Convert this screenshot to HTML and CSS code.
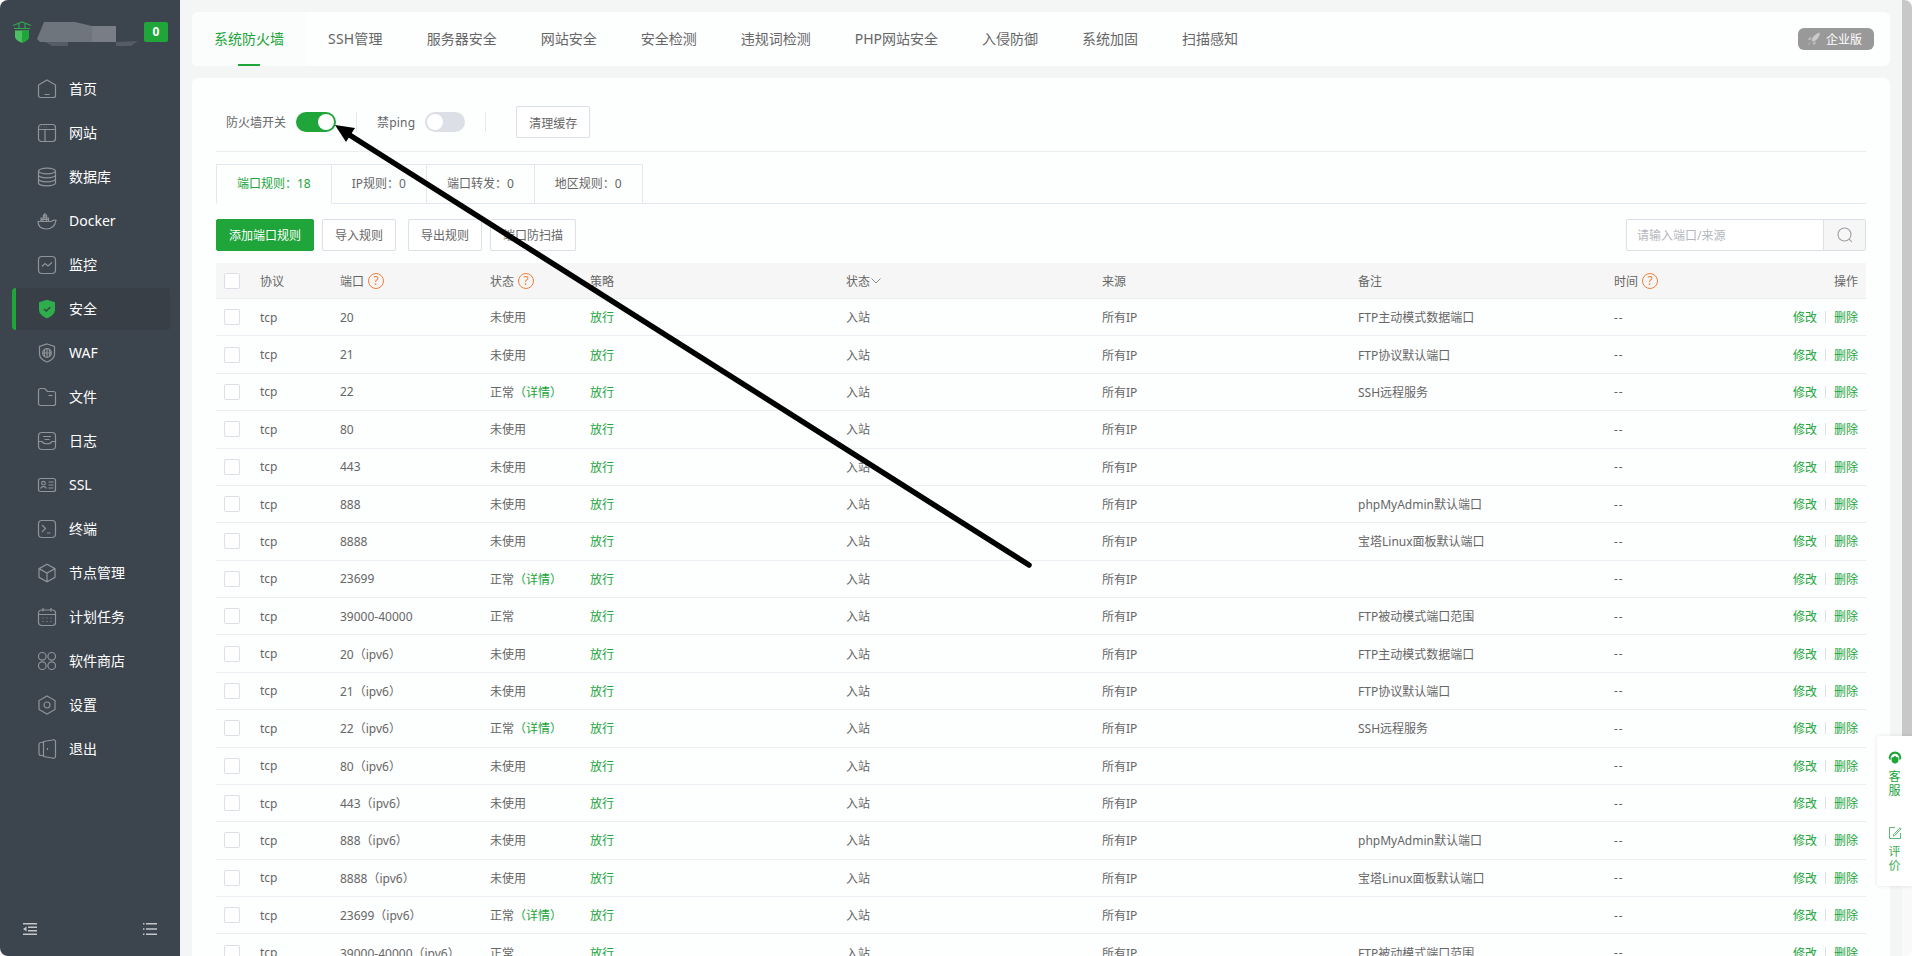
FILE: index.html
```html
<!DOCTYPE html>
<html lang="zh-CN">
<head>
    <meta charset="UTF-8">
    <title>系统防火墙</title>
    <link rel="stylesheet" href="styles.css">
</head>
<body>
<div class="app">
    <aside class="side">
        <div class="side-top">
            <svg class="logo" viewBox="0 0 20 22" width="20" height="22">
                <path d="M1 4.500 10 1l9 3.500" fill="none" stroke="#2fa84f" stroke-width="1.200"/>
                <path d="M2 7.500h16M7 3v5M13 3v5" fill="none" stroke="#2fa84f" stroke-width="1.200"/>
                <path d="M3 9.500h14v6c0 3-3.500 5-7 6.200-3.500-1.200-7-3.200-7-6.200z" fill="#4cc063"/>
                <path d="M10 9.500h7v6c0 3-3.500 5-7 6.200z" fill="#20a53a"/>
            </svg>
            <svg class="redacted" viewBox="0 0 101 26" width="101" height="26">
                <polygon points="0,18 7,1 38,1 55,5 55,21 7,21 3,21" fill="#6f757c"/>
                <rect x="55" y="5" width="24" height="16" fill="#797e86"/>
                <polygon points="7,21 31,21 31,25 15,25 10,22" fill="#555c65"/>
                <polygon points="79,21 101,20 94,25 79,25" fill="#555c65"/>
            </svg>
            <span class="msg-badge">0</span>
        </div>
        <nav class="nav">
            <a class="nav-item">
                <svg viewBox="0 0 20 20"><path d="M10 1 18.500 6v10.500a2 2 0 0 1-2 2h-13a2 2 0 0 1-2-2V6z"/><path d="M7.500 15.500h5"/></svg>
                首页
            </a>
            <a class="nav-item">
                <svg viewBox="0 0 20 20"><rect x="1.500" y="1.500" width="17" height="17" rx="3"/><path d="M1.500 6.500h17M8 6.500v12M4.500 4h.5M7 4h.5M9.500 4h.5"/></svg>
                网站
            </a>
            <a class="nav-item">
                <svg viewBox="0 0 20 20"><ellipse cx="10" cy="4" rx="8.500" ry="2.800"/><path d="M1.500 4v12c0 1.500 3.800 2.800 8.500 2.800s8.500-1.300 8.500-2.800V4M1.500 8c0 1.500 3.800 2.800 8.500 2.800s8.500-1.300 8.500-2.800M1.500 12c0 1.500 3.800 2.800 8.500 2.800s8.500-1.300 8.500-2.800"/></svg>
                数据库
            </a>
            <a class="nav-item">
                <svg viewBox="0 0 20 20"><path d="M1 10.500h13.500c.5-1.200 2-1.800 4.500-1.200-.8 4.700-4 8.700-10 8.700-5 0-8-2.800-8-7.500z"/><path d="M4 10V7h7.500v3M6.500 7V4h3v3M4 8.500h7.500M7.800 4V7M6 7v3M9.500 7v3M7.800 2v2"/></svg>
                Docker
            </a>
            <a class="nav-item">
                <svg viewBox="0 0 20 20"><rect x="1.500" y="1.500" width="17" height="17" rx="3.500"/><path d="M5 11.500 8 8.500l3 2.500 4-3.500"/></svg>
                监控
            </a>
            <a class="nav-item active">
                <svg viewBox="0 0 20 20" class="solid"><path d="M10 .8 18 3.200v7.300c0 4.200-3.600 7.200-8 8.800-4.400-1.600-8-4.600-8-8.800V3.200z" fill="#2fac4b"/><path d="M7 10l2.200 2 4-3.800" fill="none" stroke="#2b4a38" stroke-width="1.500"/></svg>
                安全
            </a>
            <a class="nav-item">
                <svg viewBox="0 0 20 20"><path d="M10 1 17.500 3.500v7.500c0 3.700-3.300 6.400-7.500 8-4.200-1.600-7.500-4.300-7.500-8V3.500z"/><circle cx="10" cy="10" r="4.300"/><path d="M5.700 10h8.600M10 5.700v8.600M7.800 6.500c-1 2.300-1 4.700 0 7M12.200 6.500c1 2.300 1 4.700 0 7"/></svg>
                WAF
            </a>
            <a class="nav-item">
                <svg viewBox="0 0 20 20"><path d="M1.500 3.500a2 2 0 0 1 2-2h4.300l2.700 3h6a2 2 0 0 1 2 2v10a2 2 0 0 1-2 2h-13a2 2 0 0 1-2-2z"/><path d="M11.500 8.500h4"/></svg>
                文件
            </a>
            <a class="nav-item">
                <svg viewBox="0 0 20 20"><rect x="1.500" y="1.500" width="17" height="17" rx="3.500"/><path d="M1.500 10.500h3.500c1.500 3 8.500 3 10 0h3.500M6 5.500h8M7.500 8.500h5"/></svg>
                日志
            </a>
            <a class="nav-item">
                <svg viewBox="0 0 20 20"><rect x="1.500" y="3.500" width="17" height="13" rx="2"/><circle cx="6.500" cy="8.200" r="1.800"/><path d="M3.500 13.500c.8-2.400 5.200-2.400 6 0M11.500 7h5M11.500 10h5M11.500 13h5"/></svg>
                SSL
            </a>
            <a class="nav-item">
                <svg viewBox="0 0 20 20"><rect x="1.500" y="1.500" width="17" height="17" rx="3.500"/><path d="M5 6l3.500 3.500L5 13M10 14h3.500"/></svg>
                终端
            </a>
            <a class="nav-item">
                <svg viewBox="0 0 20 20"><path d="M10 1.200 18 5.600v8.800l-8 4.400-8-4.400V5.600zM2 5.600l8 4.400 8-4.400M10 10v8.800"/></svg>
                节点管理
            </a>
            <a class="nav-item">
                <svg viewBox="0 0 20 20"><rect x="1.500" y="3" width="17" height="15.500" rx="3"/><path d="M1.500 7.500h17M6 1v3.500M14 1v3.500M5.500 11h1M9.500 11h1M13.500 11h1M5.500 14.500h1M9.500 14.500h1M13.500 14.500h1"/></svg>
                计划任务
            </a>
            <a class="nav-item">
                <svg viewBox="0 0 20 20"><circle cx="5.300" cy="5.300" r="3.800"/><circle cx="14.700" cy="5.300" r="3.800"/><circle cx="5.300" cy="14.700" r="3.800"/><circle cx="14.700" cy="14.700" r="3.800"/></svg>
                软件商店
            </a>
            <a class="nav-item">
                <svg viewBox="0 0 20 20"><path d="M10 1 18 5.500v9L10 19l-8-4.500v-9z"/><circle cx="10" cy="10" r="3"/></svg>
                设置
            </a>
            <a class="nav-item">
                <svg viewBox="0 0 20 20"><path d="M6.500 3.500H4a2 2 0 0 0-2 2v9a2 2 0 0 0 2 2h2.500"/><path d="M6.500 2.500 15.500 1a2 2 0 0 1 3 1.500v15a2 2 0 0 1-3 1.500l-9-1.500z"/><path d="M10.500 9v2"/></svg>
                退出
            </a>
        </nav>
        <div class="side-bottom">
            <svg viewBox="0 0 14 12" width="14" height="12"><path d="M0 .8h14M5 4.300h9M5 7.800h9M0 11.300h14" stroke="#c4c6c9" stroke-width="1.500"/><path d="M3.500 3.500v5L0 6z" fill="#c4c6c9"/></svg>
            <svg viewBox="0 0 14 12" width="14" height="12"><path d="M3 .8h11M3 6h11M3 11.300h11" stroke="#c4c6c9" stroke-width="1.500"/><path d="M0 .8h1.500M0 6h1.500M0 11.300h1.500" stroke="#c4c6c9" stroke-width="1.500"/></svg>
        </div>
    </aside>

    <main class="main">
        <div class="top-card">
            <a class="top-tab active">系统防火墙</a>
            <a class="top-tab ssh">SSH管理</a>
            <a class="top-tab">服务器安全</a>
            <a class="top-tab">网站安全</a>
            <a class="top-tab">安全检测</a>
            <a class="top-tab">违规词检测</a>
            <a class="top-tab">PHP网站安全</a>
            <a class="top-tab">入侵防御</a>
            <a class="top-tab">系统加固</a>
            <a class="top-tab">扫描感知</a>
            <a class="edition">
                <svg viewBox="0 0 14 14" width="14" height="14"><path d="M13 .5C9 1.500 6 4 4.500 8l1.800 1.800C10 8.300 12.500 5 13 .5z" fill="#c9cccb"/><path d="M4 5 1 7l2.500.8zM9 10l-2 3-.8-2.500zM3.500 10.500 1 13" fill="#b9bcbb" stroke="#b9bcbb" stroke-width=".8"/></svg>
                企业版
            </a>
        </div>

        <div class="main-card">
            <div class="switch-row">
                <span>防火墙开关</span>
                <span class="toggle on"></span>
                <span class="sep"></span>
                <span class="ping-label">禁ping</span>
                <span class="toggle"></span>
                <span class="sep"></span>
                <button class="btn clear-btn">清理缓存</button>
            </div>

            <div class="sub-tabs">
                <a class="sub-tab active">端口规则：18</a>
                <a class="sub-tab">IP规则：0</a>
                <a class="sub-tab">端口转发：0</a>
                <a class="sub-tab">地区规则：0</a>
            </div>

            <div class="toolbar">
                <button class="btn btn-green">添加端口规则</button>
                <button class="btn btn-first">导入规则</button>
                <button class="btn btn-mid">导出规则</button>
                <button class="btn btn-first">端口防扫描</button>
                <div class="search">
                    <input type="text" placeholder="请输入端口/来源">
                    <span class="search-btn">
                        <svg viewBox="0 0 16 16" width="16" height="16"><circle cx="7.500" cy="7.500" r="6.500" fill="none" stroke="#9aa0a6" stroke-width="1.100"/><path d="M12.300 12.300l2.500 2.500" stroke="#9aa0a6" stroke-width="1.100"/></svg>
                    </span>
                </div>
            </div>

            <div class="table">
                <div class="row head">
                    <span><i class="check"></i></span>
                    <span>协议</span>
                    <span>端口<i class="help">?</i></span>
                    <span>状态<i class="help">?</i></span>
                    <span>策略</span>
                    <span>状态<svg class="caret" viewBox="0 0 10 6" width="10" height="6"><path d="M.5.5 5 5l4.500-4.500" fill="none" stroke="#888" stroke-width="1"/></svg></span>
                    <span>来源</span>
                    <span>备注</span>
                    <span>时间<i class="help">?</i></span>
                    <span class="ops">操作</span>
                </div>
                <div class="row"><span><i class="check"></i></span><span>tcp</span><span>20</span><span>未使用</span><span class="green">放行</span><span>入站</span><span>所有IP</span><span>FTP主动模式数据端口</span><span>--</span><span class="ops"><a>修改</a><b></b><a>删除</a></span></div>
                <div class="row"><span><i class="check"></i></span><span>tcp</span><span>21</span><span>未使用</span><span class="green">放行</span><span>入站</span><span>所有IP</span><span>FTP协议默认端口</span><span>--</span><span class="ops"><a>修改</a><b></b><a>删除</a></span></div>
                <div class="row"><span><i class="check"></i></span><span>tcp</span><span>22</span><span>正常<em>（详情）</em></span><span class="green">放行</span><span>入站</span><span>所有IP</span><span>SSH远程服务</span><span>--</span><span class="ops"><a>修改</a><b></b><a>删除</a></span></div>
                <div class="row"><span><i class="check"></i></span><span>tcp</span><span>80</span><span>未使用</span><span class="green">放行</span><span>入站</span><span>所有IP</span><span></span><span>--</span><span class="ops"><a>修改</a><b></b><a>删除</a></span></div>
                <div class="row"><span><i class="check"></i></span><span>tcp</span><span>443</span><span>未使用</span><span class="green">放行</span><span>入站</span><span>所有IP</span><span></span><span>--</span><span class="ops"><a>修改</a><b></b><a>删除</a></span></div>
                <div class="row"><span><i class="check"></i></span><span>tcp</span><span>888</span><span>未使用</span><span class="green">放行</span><span>入站</span><span>所有IP</span><span>phpMyAdmin默认端口</span><span>--</span><span class="ops"><a>修改</a><b></b><a>删除</a></span></div>
                <div class="row"><span><i class="check"></i></span><span>tcp</span><span>8888</span><span>未使用</span><span class="green">放行</span><span>入站</span><span>所有IP</span><span>宝塔Linux面板默认端口</span><span>--</span><span class="ops"><a>修改</a><b></b><a>删除</a></span></div>
                <div class="row"><span><i class="check"></i></span><span>tcp</span><span>23699</span><span>正常<em>（详情）</em></span><span class="green">放行</span><span>入站</span><span>所有IP</span><span></span><span>--</span><span class="ops"><a>修改</a><b></b><a>删除</a></span></div>
                <div class="row"><span><i class="check"></i></span><span>tcp</span><span>39000-40000</span><span>正常</span><span class="green">放行</span><span>入站</span><span>所有IP</span><span>FTP被动模式端口范围</span><span>--</span><span class="ops"><a>修改</a><b></b><a>删除</a></span></div>
                <div class="row"><span><i class="check"></i></span><span>tcp</span><span>20（ipv6）</span><span>未使用</span><span class="green">放行</span><span>入站</span><span>所有IP</span><span>FTP主动模式数据端口</span><span>--</span><span class="ops"><a>修改</a><b></b><a>删除</a></span></div>
                <div class="row"><span><i class="check"></i></span><span>tcp</span><span>21（ipv6）</span><span>未使用</span><span class="green">放行</span><span>入站</span><span>所有IP</span><span>FTP协议默认端口</span><span>--</span><span class="ops"><a>修改</a><b></b><a>删除</a></span></div>
                <div class="row"><span><i class="check"></i></span><span>tcp</span><span>22（ipv6）</span><span>正常<em>（详情）</em></span><span class="green">放行</span><span>入站</span><span>所有IP</span><span>SSH远程服务</span><span>--</span><span class="ops"><a>修改</a><b></b><a>删除</a></span></div>
                <div class="row"><span><i class="check"></i></span><span>tcp</span><span>80（ipv6）</span><span>未使用</span><span class="green">放行</span><span>入站</span><span>所有IP</span><span></span><span>--</span><span class="ops"><a>修改</a><b></b><a>删除</a></span></div>
                <div class="row"><span><i class="check"></i></span><span>tcp</span><span>443（ipv6）</span><span>未使用</span><span class="green">放行</span><span>入站</span><span>所有IP</span><span></span><span>--</span><span class="ops"><a>修改</a><b></b><a>删除</a></span></div>
                <div class="row"><span><i class="check"></i></span><span>tcp</span><span>888（ipv6）</span><span>未使用</span><span class="green">放行</span><span>入站</span><span>所有IP</span><span>phpMyAdmin默认端口</span><span>--</span><span class="ops"><a>修改</a><b></b><a>删除</a></span></div>
                <div class="row"><span><i class="check"></i></span><span>tcp</span><span>8888（ipv6）</span><span>未使用</span><span class="green">放行</span><span>入站</span><span>所有IP</span><span>宝塔Linux面板默认端口</span><span>--</span><span class="ops"><a>修改</a><b></b><a>删除</a></span></div>
                <div class="row"><span><i class="check"></i></span><span>tcp</span><span>23699（ipv6）</span><span>正常<em>（详情）</em></span><span class="green">放行</span><span>入站</span><span>所有IP</span><span></span><span>--</span><span class="ops"><a>修改</a><b></b><a>删除</a></span></div>
                <div class="row"><span><i class="check"></i></span><span>tcp</span><span>39000-40000（ipv6）</span><span>正常</span><span class="green">放行</span><span>入站</span><span>所有IP</span><span>FTP被动模式端口范围</span><span>--</span><span class="ops"><a>修改</a><b></b><a>删除</a></span></div>
            </div>
        </div>
    </main>

    <div class="scrollbar"><div class="thumb"></div></div>

    <div class="float-box">
        <a class="float-item">
            <svg viewBox="0 0 14 14" width="14" height="14"><path d="M7 .5a6.300 6.300 0 0 0-6.300 6.300c0 1.300.8 2.200 2 2.200V7a4.300 4.300 0 0 1 8.600 0v2c1.200 0 2-.9 2-2.200A6.300 6.300 0 0 0 7 .5z" fill="#20a53a"/><path d="M3.500 6.500C5 6.500 6.500 5.500 7 4.500c.5 1 2 2 3.500 2V9c0 2-1.500 3.500-3.500 3.500S3.500 11 3.500 9z" fill="#20a53a"/></svg>
            <span>客<br>服</span>
        </a>
        <a class="float-item">
            <svg viewBox="0 0 14 14" width="14" height="14"><path d="M12.500 7v5.500h-11v-11H7" fill="none" stroke="#5cb974" stroke-width="1"/><path d="M5.500 8.800 12 1.800l1 1-6.500 7-1.300.3z" fill="none" stroke="#5cb974" stroke-width="1"/></svg>
            <span>评<br>价</span>
        </a>
    </div>

    <svg class="arrow" viewBox="0 0 1912 956" width="1912" height="956">
        <path d="M1029 565 348 134" fill="none" stroke="#000" stroke-width="5.500" stroke-linecap="round"/>
        <path d="M335 125 355 128 346 142z" fill="#000"/>
    </svg>
</div>
</body>
</html>
```

FILE: styles.css
```css
* {
    box-sizing: border-box;
}
html, body {
    margin: 0;
    height: 100%;
    background: #fff;
    overflow: hidden;
}
body {
    font-family: "Noto Sans", "Noto Sans CJK SC", sans-serif;
    font-size: 12px;
    color: #666;
}
a {
    text-decoration: none;
}
.app {
    position: relative;
    display: flex;
    height: 956px;
    border-radius: 8px;
    overflow: hidden;
    background: #f4f6f6;
}

/* sidebar */
.side {
    display: flex;
    flex-direction: column;
    flex: 0 0 180px;
    height: 100%;
    background: #3c444d;
}
.side-top {
    display: flex;
    align-items: center;
    height: 44px;
    margin-top: 10px;
    padding: 0 12px;
}
.logo {
    flex: none;
}
.redacted {
    flex: none;
    margin-left: 5px;
    margin-top: 3px;
}
.msg-badge {
    flex: none;
    width: 24px;
    height: 20px;
    margin-left: 6px;
    border-radius: 2px;
    background: #20a53a;
    color: #fff;
    font-size: 12px;
    font-weight: bold;
    line-height: 20px;
    text-align: center;
}
.nav {
    flex: 1;
    padding: 14px 10px 0 12px;
}
.nav-item {
    display: flex;
    align-items: center;
    height: 42px;
    margin-bottom: 2px;
    padding: 0 0 2px 25px;
    border-radius: 4px;
    color: #fff;
    font-size: 14px;
}
.nav-item svg {
    flex: none;
    width: 20px;
    height: 20px;
    margin: 2px 12px 0 0;
    fill: none;
    stroke: #8f9499;
    stroke-width: 1.2;
}
.nav-item svg.solid {
    stroke: none;
}
.nav-item.active {
    background: #383f47;
    border-left: 4px solid #20a53a;
    padding-left: 21px;
}
.side-bottom {
    display: flex;
    justify-content: space-between;
    padding: 0 23px 21px;
}

/* main area */
.main {
    flex: 1;
    min-width: 0;
    padding: 12px 12px 0;
}
.top-card {
    display: flex;
    align-items: stretch;
    height: 54px;
    border-radius: 6px;
    background: #fdfefe;
}
.top-tab {
    display: flex;
    align-items: center;
    position: relative;
    padding: 0 22px 2px;
    color: #666;
    font-size: 14px;
}
.top-tab.ssh {
    letter-spacing: .2px;
}
.top-tab.active {
    color: #20a53a;
    background: #fbfcfc;
    border-radius: 6px 0 0 6px;
}
.top-tab.active::after {
    content: "";
    position: absolute;
    left: 46px;
    bottom: 0;
    width: 22px;
    height: 2px;
    background: #20a53a;
}
.edition {
    display: flex;
    align-items: center;
    align-self: center;
    gap: 5px;
    height: 22px;
    margin-left: auto;
    margin-right: 16px;
    padding: 0 12px 0 9px;
    border-radius: 6px;
    background: #999;
    color: #fff;
    font-size: 12px;
}
.main-card {
    height: 900px;
    margin-top: 12px;
    padding: 28px 24px 0;
    border-radius: 6px 6px 0 0;
    background: #fdfefe;
}
.switch-row {
    display: flex;
    align-items: flex-start;
    height: 46px;
    padding-left: 10px;
    border-bottom: 1px solid #ebeef0;
    line-height: 34px;
}
.toggle {
    position: relative;
    width: 40px;
    height: 20px;
    margin: 6px 0 0 10px;
    border-radius: 10px;
    background: #dcdfe6;
}
.toggle::after {
    content: "";
    position: absolute;
    top: 2px;
    left: 2px;
    width: 16px;
    height: 16px;
    border-radius: 50%;
    background: #fff;
}
.toggle.on {
    background: #20a53a;
}
.toggle.on::after {
    left: 22px;
}
.sep {
    width: 1px;
    height: 20px;
    margin: 6px 0 0 20px;
    background: #e6e8ea;
}
.ping-label {
    margin-left: 20px;
    letter-spacing: .2px;
}
.btn {
    height: 32px;
    padding: 0 12px;
    border: 1px solid #dcdfe6;
    border-radius: 2px;
    background: #fff;
    color: #666;
    font: inherit;
}
.clear-btn {
    margin-left: 30px;
    width: 74px;
}
.btn-green {
    border-color: #20a53a;
    background: #20a53a;
    color: #fff;
}
.btn-first {
    margin-left: 8px;
}
.btn-mid {
    margin-left: 12px;
}
.sub-tabs {
    display: flex;
    margin-top: 12px;
    border-bottom: 1px solid #e4e7ed;
}
.sub-tab {
    height: 40px;
    margin-bottom: -1px;
    padding: 0 20px;
    border: 1px solid #e4e7ed;
    border-left-width: 0;
    color: #666;
    line-height: 38px;
}
.sub-tab.active {
    border-left-width: 1px;
    border-bottom-color: #fdfefe;
    color: #20a53a;
}
.toolbar {
    display: flex;
    margin-top: 15px;
}
.search {
    display: flex;
    margin-left: auto;
    width: 240px;
    height: 32px;
    border: 1px solid #dcdfe6;
    border-radius: 2px;
    background: #fff;
}
.search input {
    flex: 1;
    min-width: 0;
    padding: 0 10px;
    border: 0;
    outline: 0;
    background: transparent;
    font: inherit;
}
.search input::placeholder {
    color: #b4b7bd;
}
.search-btn {
    display: flex;
    align-items: center;
    justify-content: center;
    flex: 0 0 42px;
    border-left: 1px solid #dcdfe6;
    background: #f6f6f6;
}

/* port table */
.table {
    margin-top: 12px;
}
.row {
    display: grid;
    grid-template-columns: 36px 80px 150px 100px 256px 256px 256px 256px 156px 104px;
    align-items: center;
    height: 37.38px;
    border-bottom: 1px solid #ebeef2;
}
.row > span {
    display: flex;
    align-items: center;
    padding-left: 8px;
    white-space: nowrap;
}
.row:not(.head) > span:nth-child(9) {
    letter-spacing: 1px;
}
.row.head {
    height: 36px;
    background: #f6f6f6;
}
.check {
    display: block;
    width: 16px;
    height: 16px;
    border: 1px solid #dcdfe6;
    border-radius: 2px;
    background: #fff;
}
.help {
    display: inline-block;
    width: 16px;
    height: 16px;
    margin-left: 4px;
    border: 1px solid #f0803c;
    border-radius: 50%;
    color: #f0803c;
    font-size: 12px;
    font-style: normal;
    line-height: 14px;
    text-align: center;
}
.caret {
    margin-left: 1px;
}
.green, .ops a, .row em {
    color: #20a53a;
    font-style: normal;
}
.row > .ops {
    justify-content: flex-end;
    padding: 0 8px 0 0;
}
.ops b {
    width: 1px;
    height: 12px;
    margin: 0 8px;
    background: #dcdfe6;
}

/* page scrollbar */
.scrollbar {
    flex: 0 0 10px;
    height: 100%;
    background: #f9f9f9;
}
.thumb {
    height: 736px;
    background: #c8c8c8;
}

/* floating service box */
.float-box {
    position: absolute;
    top: 736px;
    right: 0;
    width: 35px;
    height: 150px;
    padding-top: 15px;
    border-radius: 3px 0 0 3px;
    background: #fff;
    box-shadow: 0 0 4px rgba(0, 0, 0, .1);
}
.float-item {
    display: flex;
    flex-direction: column;
    align-items: center;
    height: 75px;
    color: #20a53a;
    font-size: 12px;
    line-height: 14px;
    text-align: center;
}
.float-item svg {
    margin-bottom: 5px;
}
.float-item + .float-item {
    color: #3cae55;
}

/* arrow drawn over the screenshot */
.arrow {
    position: absolute;
    top: 0;
    left: 0;
    pointer-events: none;
}
```
